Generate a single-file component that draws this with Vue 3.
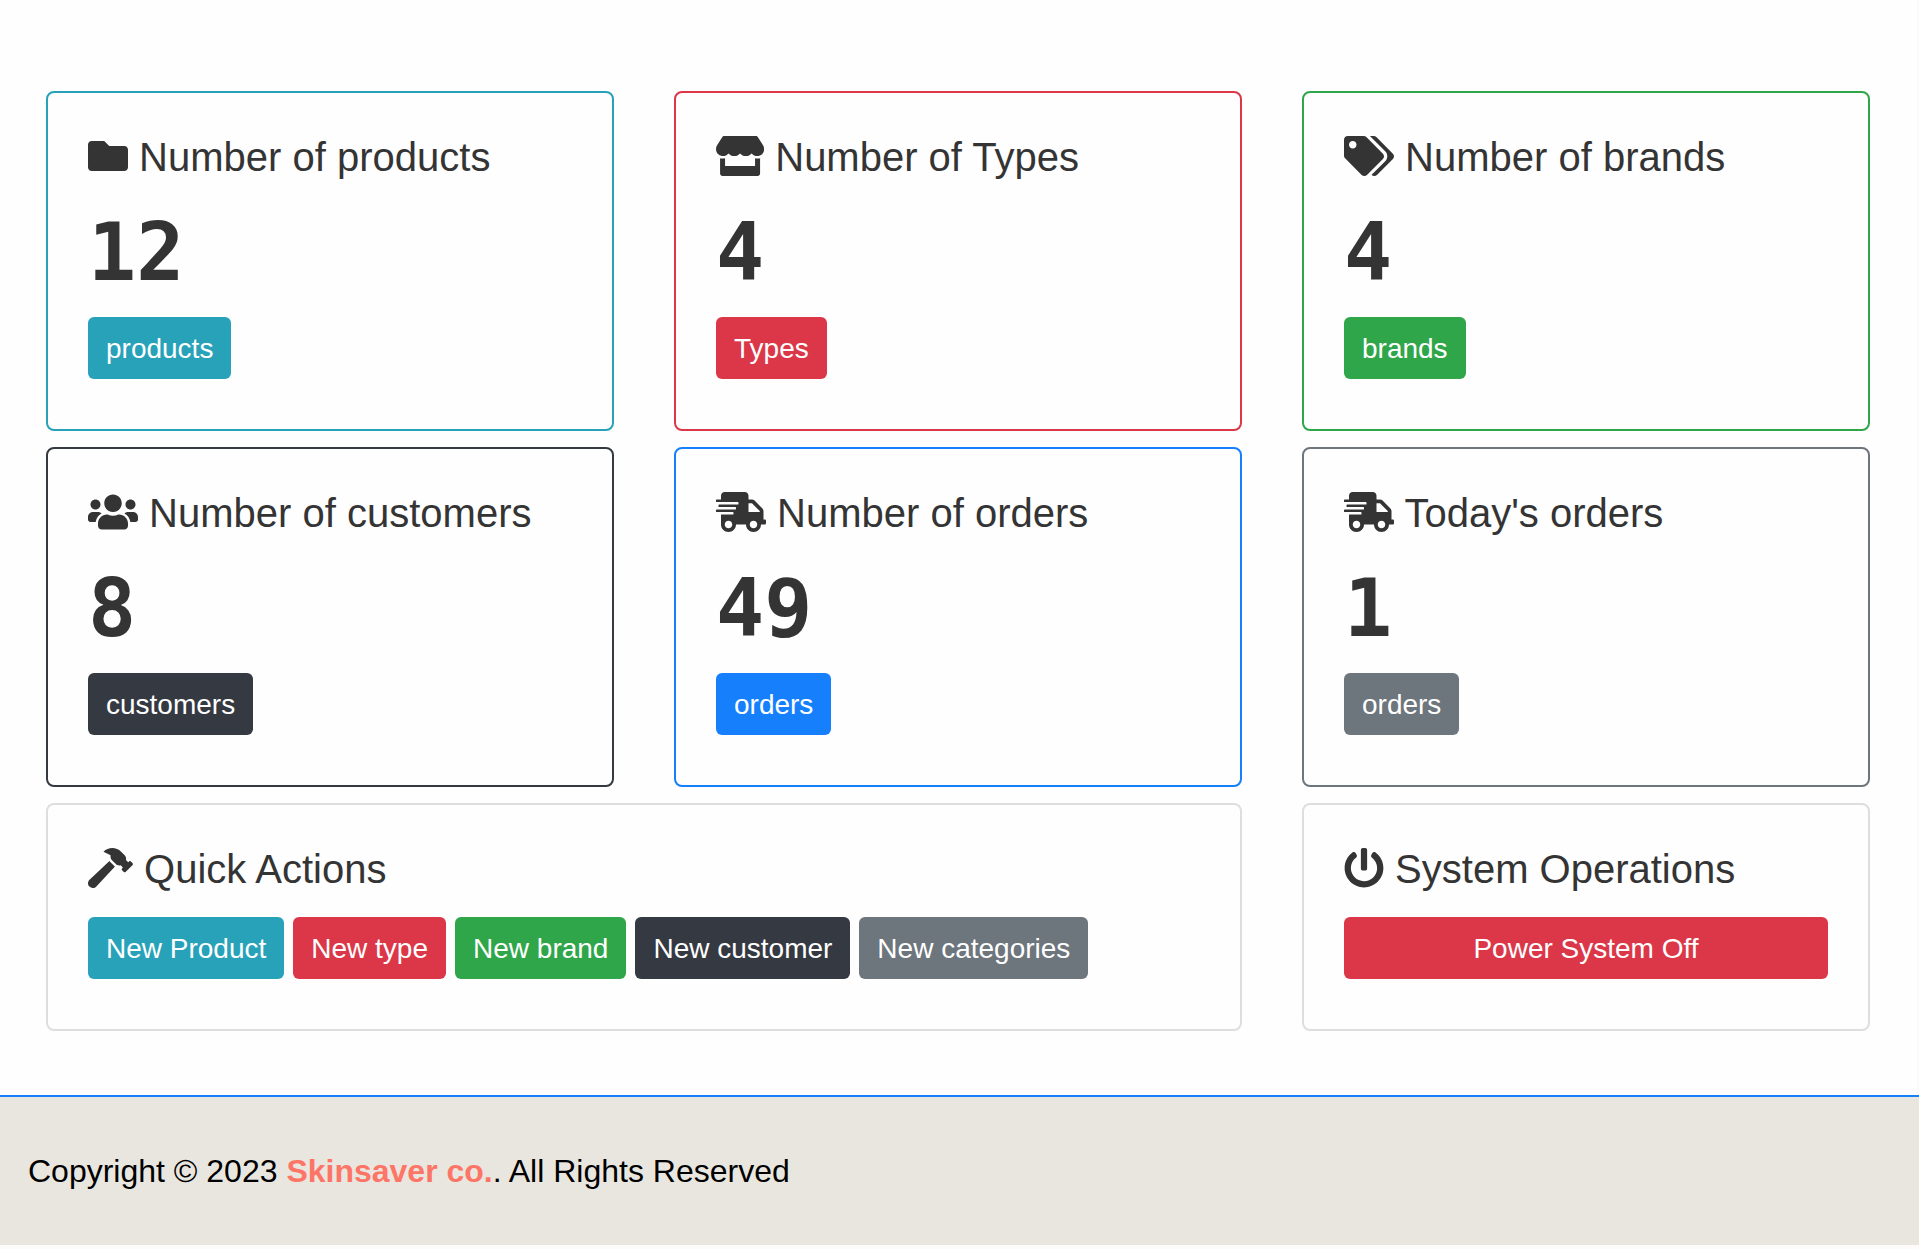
<script setup>
const icons = {
  folder: {
    width: 512,
    path: 'M464 128H272l-64-64H48C21.49 64 0 85.49 0 112v288c0 26.51 21.49 48 48 48h416c26.51 0 48-21.49 48-48V176c0-26.51-21.49-48-48-48z',
  },
  store: {
    width: 616,
    path: 'M602 118.6L537.1 15C531.3 5.7 521 0 510 0H106C95 0 84.7 5.7 78.9 15L14 118.6c-33.5 53.5-3.8 127.9 58.8 136.4 4.5.6 9.1.9 13.7.9 29.6 0 55.8-13 73.8-33.1 18 20.1 44.3 33.1 73.8 33.1 29.6 0 55.8-13 73.8-33.1 18 20.1 44.3 33.1 73.8 33.1 29.6 0 55.8-13 73.8-33.1 18.1 20.1 44.3 33.1 73.8 33.1 4.7 0 9.2-.3 13.7-.9 62.8-8.4 92.6-82.8 59-136.4zM529.5 288c-10 0-19.9-1.5-29.5-3.8V384H116v-99.8c-9.6 2.2-19.5 3.8-29.5 3.8-6 0-12.1-.4-18-1.2-5.6-.8-11.1-2.1-16.4-3.6V480c0 17.7 14.3 32 32 32h448c17.7 0 32-14.3 32-32V283.2c-5.4 1.6-10.8 2.9-16.4 3.6-6.1.8-12.1 1.2-18.2 1.2z',
  },
  tags: {
    width: 640,
    path: 'M497.941 225.941L286.059 14.059A48 48 0 0 0 252.118 0H48C21.49 0 0 21.49 0 48v204.118a48 48 0 0 0 14.059 33.941l211.882 211.882c18.744 18.745 49.136 18.746 67.882 0l204.118-204.118c18.745-18.745 18.745-49.137 0-67.882zM112 160c-26.51 0-48-21.49-48-48s21.49-48 48-48 48 21.49 48 48-21.49 48-48 48zm513.941 133.823L421.823 497.941c-18.745 18.745-49.137 18.745-67.882 0l-.36-.36L527.64 323.522c16.999-16.999 26.362-39.6 26.362-63.64s-9.362-46.641-26.362-63.64L331.397 0h48.721a48 48 0 0 1 33.941 14.059l211.882 211.882c18.745 18.745 18.745 49.137 0 67.882z',
  },
  users: {
    width: 640,
    path: 'M96 224c35.3 0 64-28.7 64-64s-28.7-64-64-64-64 28.7-64 64 28.7 64 64 64zm448 0c35.3 0 64-28.7 64-64s-28.7-64-64-64-64 28.7-64 64 28.7 64 64 64zm32 32h-64c-17.6 0-33.5 7.1-45.1 18.6 40.3 22.1 68.9 62 75.1 109.4h66c17.7 0 32-14.3 32-32v-32c0-35.3-28.7-64-64-64zm-256 0c61.9 0 112-50.1 112-112S381.9 32 320 32 208 82.1 208 144s50.1 112 112 112zm76.8 32h-8.3c-20.8 10-43.9 16-68.5 16s-47.6-6-68.5-16h-8.3C179.6 288 128 339.6 128 403.2V432c0 26.5 21.5 48 48 48h288c26.5 0 48-21.5 48-48v-28.8c0-63.6-51.6-115.2-115.2-115.2zm-223.7-13.4C161.5 263.1 145.6 256 128 256H64c-35.3 0-64 28.7-64 64v32c0 17.7 14.3 32 32 32h65.9c6.3-47.4 34.9-87.3 75.2-109.4z',
  },
  truck: {
    width: 640,
    path: 'M624 352h-16V243.9c0-12.7-5.1-24.9-14.1-33.9L494 110.1c-9-9-21.2-14.1-33.9-14.1H416V48c0-26.5-21.5-48-48-48H112C85.5 0 64 21.5 64 48v48H8c-4.4 0-8 3.6-8 8v16c0 4.4 3.6 8 8 8h272c4.4 0 8 3.6 8 8v16c0 4.4-3.6 8-8 8H40c-4.4 0-8 3.6-8 8v16c0 4.4 3.6 8 8 8h208c4.4 0 8 3.6 8 8v16c0 4.4-3.6 8-8 8H8c-4.4 0-8 3.6-8 8v16c0 4.4 3.6 8 8 8h208c4.4 0 8 3.6 8 8v16c0 4.4-3.6 8-8 8H64v128c0 53 43 96 96 96s96-43 96-96h128c0 53 43 96 96 96s96-43 96-96h48c8.8 0 16-7.2 16-16v-32c0-8.8-7.2-16-16-16zM160 464c-26.5 0-48-21.5-48-48s21.5-48 48-48 48 21.5 48 48-21.5 48-48 48zm320 0c-26.5 0-48-21.5-48-48s21.5-48 48-48 48 21.5 48 48-21.5 48-48 48zm80-208H416V144h44.1l99.9 99.9V256z',
  },
  hammer: {
    width: 576,
    path: 'M571.31 193.94l-22.63-22.63c-6.25-6.25-16.38-6.25-22.63 0l-11.31 11.31-28.9-28.9c5.63-21.31.36-44.9-16.35-61.61l-45.25-45.25c-62.48-62.48-163.79-62.48-226.28 0l90.51 45.25v18.75c0 16.97 6.74 33.25 18.75 45.25l49.14 49.14c16.71 16.71 40.3 21.98 61.61 16.35l28.9 28.9-11.31 11.31c-6.25 6.25-6.25 16.38 0 22.63l22.63 22.63c6.25 6.25 16.38 6.25 22.63 0l90.51-90.51c6.23-6.24 6.23-16.37-.02-22.62zm-286.72-15.2c-3.7-3.7-6.84-7.79-9.85-11.95L19.64 404.96c-25.57 23.88-26.26 64.19-1.53 88.93s65.05 24.05 88.92-1.53l238.13-255.07c-3.96-2.91-7.9-5.87-11.44-9.41l-49.13-49.14z',
  },
  power: {
    width: 512,
    path: 'M400 54.1c63 45 104 118.6 104 201.9 0 136.8-110.8 247.7-247.5 248C120 504.3 8.2 393 8 256.4 7.9 173.1 48.9 99.3 111.8 54.2c11.7-8.3 28-4.8 35 7.7L162.6 90c5.9 10.5 3.1 23.8-6.6 31-41.5 30.8-68 79.6-68 134.9-.1 92.3 74.5 168.1 168 168.1 91.6 0 168.6-74.2 168-169.1-.3-51.8-24.7-101.8-68.1-134-9.7-7.2-12.4-20.5-6.5-30.9l15.8-28.1c7-12.4 23.2-16.1 34.8-7.8zM296 264V24c0-13.3-10.7-24-24-24h-32c-13.3 0-24 10.7-24 24v240c0 13.3 10.7 24 24 24h32c13.3 0 24-10.7 24-24z',
  },
}

const stats = [
  { title: 'Number of products', icon: 'folder', value: 12, link: 'products', tone: 'info' },
  { title: 'Number of Types', icon: 'store', value: 4, link: 'Types', tone: 'danger' },
  { title: 'Number of brands', icon: 'tags', value: 4, link: 'brands', tone: 'success' },
  { title: 'Number of customers', icon: 'users', value: 8, link: 'customers', tone: 'dark' },
  { title: 'Number of orders', icon: 'truck', value: 49, link: 'orders', tone: 'primary' },
  { title: "Today's orders", icon: 'truck', value: 1, link: 'orders', tone: 'secondary' },
]

const actions = [
  { label: 'New Product', tone: 'info' },
  { label: 'New type', tone: 'danger' },
  { label: 'New brand', tone: 'success' },
  { label: 'New customer', tone: 'dark' },
  { label: 'New categories', tone: 'secondary' },
]
</script>

<template>
  <div class="page">
    <main class="board">
      <section v-for="stat in stats" :key="stat.title" class="card" :class="`tone-${stat.tone}`">
        <h2 class="title">
          <svg class="icon" :viewBox="`0 0 ${icons[stat.icon].width} 512`" aria-hidden="true">
            <path :d="icons[stat.icon].path" />
          </svg>
          {{ stat.title }}
        </h2>
        <p class="value">{{ stat.value }}</p>
        <a class="btn" href="#">{{ stat.link }}</a>
      </section>

      <section class="card wide">
        <h2 class="title">
          <svg class="icon" :viewBox="`0 0 ${icons.hammer.width} 512`" aria-hidden="true">
            <path :d="icons.hammer.path" />
          </svg>
          Quick Actions
        </h2>
        <div class="actions">
          <a v-for="action in actions" :key="action.label" class="btn" :class="`tone-${action.tone}`" href="#">{{ action.label }}</a>
        </div>
      </section>

      <section class="card">
        <h2 class="title">
          <svg class="icon" :viewBox="`0 0 ${icons.power.width} 512`" aria-hidden="true">
            <path :d="icons.power.path" />
          </svg>
          System Operations
        </h2>
        <button type="button" class="btn block tone-danger">Power System Off</button>
      </section>
    </main>

    <footer class="footer">
      Copyright © 2023 <a class="brand" href="#">Skinsaver co.</a>. All Rights Reserved
    </footer>
  </div>
</template>

<style>
body {
  margin: 0;
  background: #fdfcfa;
}
</style>

<style scoped>
.page {
  font-family: "Liberation Sans", Arial, Helvetica, sans-serif;
  color: #343434;
}

.board {
  display: grid;
  grid-template-columns: repeat(3, minmax(0, 1fr));
  gap: 16px 60px;
  padding: 91px 47px 64px 46px;
  border-right: 2px solid #fafafa;
  background: #fefefe;
}

.card {
  --tone: #dedede;
  box-sizing: border-box;
  padding: 40px 40px 50px;
  border: 2px solid var(--tone);
  border-radius: 8px;
}

.wide {
  grid-column: span 2;
}

.tone-info { --tone: #27a2b9; }
.tone-danger { --tone: #db3748; }
.tone-success { --tone: #30a64a; }
.tone-dark { --tone: #353941; }
.tone-primary { --tone: #167ffc; }
.tone-secondary { --tone: #6d757d; }

.title {
  margin: 0 0 24px;
  font-size: 40px;
  font-weight: 400;
  line-height: 48px;
}

.icon {
  height: 40px;
  vertical-align: -5px;
  fill: currentColor;
}

.value {
  margin: 0 0 16px;
  font-family: "DejaVu Sans Mono", monospace;
  font-size: 80px;
  font-weight: 700;
  line-height: 96px;
}

.btn {
  display: inline-block;
  box-sizing: border-box;
  padding: 11px 18px 9px;
  border: 0;
  border-radius: 6px;
  background: var(--tone);
  color: #fff;
  font-family: inherit;
  font-size: 28px;
  line-height: 42px;
  text-align: center;
  text-decoration: none;
  vertical-align: top;
  cursor: pointer;
}

.block {
  display: block;
  width: 100%;
}

.actions {
  display: flex;
  flex-wrap: wrap;
  gap: 9px;
}

.footer {
  padding: 50px 28px;
  border-top: 2px solid #167ffc;
  background: #e9e6df;
  color: #000;
  font-size: 32px;
  line-height: 48px;
}

.brand {
  color: #fd7567;
  font-weight: 700;
  text-decoration: none;
}
</style>
